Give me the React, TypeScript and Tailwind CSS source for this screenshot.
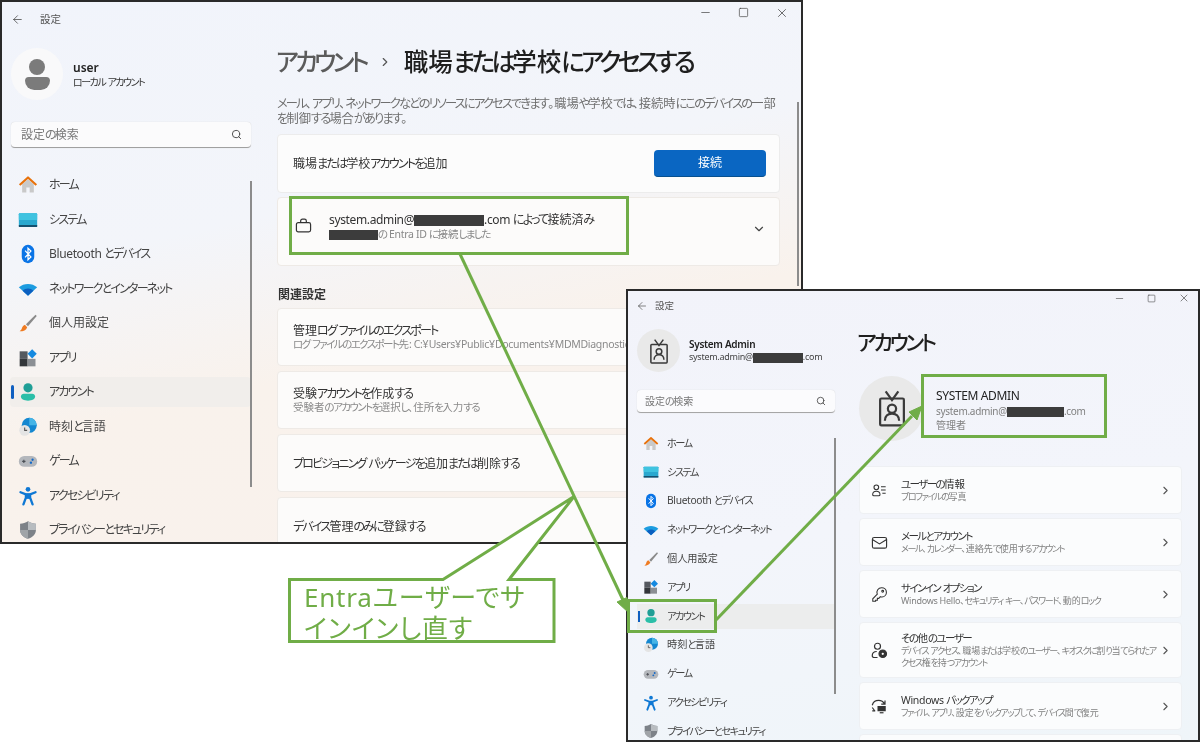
import { ArrowLeft, ChevronDown, ChevronRight, Minus, Search, Square, X } from 'lucide-react'
import type { ReactNode } from 'react'

// Yu Gothic UI's kana are much narrower than Noto's, so kana runs get tightened
function T({ children }: { children: string }) {
  const parts = children.split(/([\u3040-\u30ff]+|[\x20-\x7e]+)/).filter(Boolean)
  return (
    <>
      {parts.map((part, i) => {
        if (/^[\u3040-\u30ff]/.test(part)) return <span key={i} className="tracking-[-0.15em]">{part}</span>
        if (/^[\x20-\x7e]/.test(part)) return <span key={i} className="tracking-[-0.03em]">{part}</span>
        return <span key={i}>{part}</span>
      })}
    </>
  )
}

// ── Nav icons ────────────────────────────────────────────────────────────────
function HomeIcon({ size }: { size: number }) {
  return (
    <svg width={size} height={size} viewBox="0 0 24 24">
      <path d="M5 11 12 5l7 6v10h-5v-6h-4v6H5z" fill="#c9c9c9" />
      <path d="M2 12 12 3l10 9" fill="none" stroke="#e8710a" strokeWidth="2.6" strokeLinejoin="round" />
    </svg>
  )
}
function SystemIcon({ size }: { size: number }) {
  return (
    <svg width={size} height={size} viewBox="0 0 24 24">
      <rect x="1" y="4" width="22" height="16" rx="1" fill="#2aa8cf" />
      <rect x="1" y="4" width="22" height="8" rx="1" fill="#3fc3e0" />
      <rect x="1" y="18" width="22" height="2.4" fill="#14506f" />
    </svg>
  )
}
function BluetoothIcon({ size }: { size: number }) {
  return (
    <svg width={size} height={size} viewBox="0 0 24 24">
      <rect x="4.5" y="1" width="15" height="22" rx="7.5" fill="#0a74e6" />
      <path d="m8.5 8 7 7.5-3.5 3.5V5l3.5 3.500-7 7.500" fill="none" stroke="#fff" strokeWidth="1.5" />
    </svg>
  )
}
function WifiIcon({ size }: { size: number }) {
  return (
    <svg width={size} height={size} viewBox="0 0 24 24">
      <path d="M1 10c6-5.500 16-5.500 22 0l-11 10z" fill="#1c9ce0" />
      <path d="M5.500 14c4-3.500 9-3.500 13 0l-6.500 6z" fill="#0b5fc0" />
    </svg>
  )
}
function BrushIcon({ size }: { size: number }) {
  return (
    <svg width={size} height={size} viewBox="0 0 24 24">
      <path d="M21 2 9.500 13.500l2.500 2.500L22.500 3.500z" fill="#8a8a8a" />
      <path d="M8.500 14.500 11 17c-1 3.500-4.500 5-9 5 2-1.500 2.500-3 3-4.500.5-1.500 1.500-3 3.500-3.500z" fill="#ef7b22" />
    </svg>
  )
}
function AppsIcon({ size }: { size: number }) {
  return (
    <svg width={size} height={size} viewBox="0 0 24 24">
      <rect x="2" y="4" width="9.500" height="9" fill="#55595f" />
      <rect x="2" y="13" width="9.500" height="9" fill="#33363a" />
      <rect x="11.500" y="13" width="9.500" height="9" fill="#8b8f94" />
      <path d="m17 1.500 5.500 5.500-5.500 5.500L11.500 7z" fill="#1489e0" />
    </svg>
  )
}
function AccountIcon({ size }: { size: number }) {
  return (
    <svg width={size} height={size} viewBox="0 0 24 24">
      <circle cx="12" cy="7" r="5.500" fill="#1f9f96" />
      <path d="M3.500 17.500c0-2 1.500-3.500 3.500-3.500h10c2 0 3.500 1.500 3.500 3.500 0 3-3.500 5-8.500 5s-8.500-2-8.500-5z" fill="#2bbfa8" />
    </svg>
  )
}
function TimeIcon({ size }: { size: number }) {
  return (
    <svg width={size} height={size} viewBox="0 0 24 24">
      <circle cx="13.500" cy="10" r="9" fill="#1487d0" />
      <path d="M13.500 1a9 9 0 0 1 9 9h-9z" fill="#45b4e6" />
      <circle cx="8" cy="16" r="6.500" fill="#e4e4e4" />
      <path d="M8 12.500V16h3" fill="none" stroke="#555" strokeWidth="1.300" />
    </svg>
  )
}
function GameIcon({ size }: { size: number }) {
  return (
    <svg width={size} height={size} viewBox="0 0 24 24">
      <rect x="1" y="6" width="22" height="13" rx="6.500" fill="#b4b7bc" />
      <path d="M5 12.500h4M7 10.500v4" stroke="#4b4f55" strokeWidth="1.400" />
      <circle cx="17.500" cy="10.500" r="1.400" fill="#1469c8" />
      <circle cx="15.500" cy="14" r="1.400" fill="#1469c8" />
    </svg>
  )
}
function AccessIcon({ size }: { size: number }) {
  return (
    <svg width={size} height={size} viewBox="0 0 24 24">
      <circle cx="12" cy="4" r="2.800" fill="#0f78d4" />
      <path d="M3 7.500 9.500 10v4L6.500 22M21 7.500 14.500 10v4l3 8M9.500 10h5M9.500 14h5" fill="none" stroke="#0f78d4" strokeWidth="2.800" strokeLinecap="round" strokeLinejoin="round" />
      <rect x="9.500" y="9" width="5" height="6" fill="#0f78d4" />
    </svg>
  )
}
function ShieldIcon({ size }: { size: number }) {
  return (
    <svg width={size} height={size} viewBox="0 0 24 24">
      <path d="M12 1.500c3 2 6 3 9.500 3V12c0 5-4 9-9.500 10.500C6.500 21 2.500 17 2.500 12V4.500c3.500 0 6.500-1 9.500-3z" fill="#7d8288" />
      <path d="M12 1.500c3 2 6 3 9.500 3V12H12z" fill="#b8bcc0" />
      <path d="M12 12v10.500C6.500 21 2.500 17 2.500 12z" fill="#a0a4a8" />
    </svg>
  )
}

function BadgeIcon({ size }: { size: number }) {
  return (
    <svg width={size} height={size} viewBox="0 0 24 24" fill="none" stroke="#3a3a3a" strokeWidth="1.400">
      <path d="M8 1.500 12 7l4-5.500" />
      <rect x="4.500" y="6" width="15" height="17" rx=".8" />
      <circle cx="12" cy="12.500" r="2.600" />
      <path d="M7.500 20c0-3 2-4.500 4.500-4.500s4.500 1.500 4.500 4.500" />
    </svg>
  )
}

const NAV = [
  { label: 'ホーム', Icon: HomeIcon },
  { label: 'システム', Icon: SystemIcon },
  { label: 'Bluetooth とデバイス', Icon: BluetoothIcon },
  { label: 'ネットワークとインターネット', Icon: WifiIcon },
  { label: '個人用設定', Icon: BrushIcon },
  { label: 'アプリ', Icon: AppsIcon },
  { label: 'アカウント', Icon: AccountIcon },
  { label: '時刻と言語', Icon: TimeIcon },
  { label: 'ゲーム', Icon: GameIcon },
  { label: 'アクセシビリティ', Icon: AccessIcon },
  { label: 'プライバシーとセキュリティ', Icon: ShieldIcon },
]

function Redact({ className }: { className: string }) {
  return <span className={`inline-block align-middle bg-[#3c3c3c] ${className}`} />
}

function WindowControls({ large }: { large: boolean }) {
  const size = large ? 13 : 11
  return (
    <div className={large ? 'flex items-center gap-[26px] pr-[12px] pb-[15px] text-[#444]' : 'flex items-center gap-[22px] pr-[8px] pb-[14px] text-[#444]'}>
      <Minus size={size} strokeWidth={1.300} />
      <Square size={size - 2} strokeWidth={1.500} />
      <X size={size + 1} strokeWidth={1.300} />
    </div>
  )
}

// ── Left window ──────────────────────────────────────────────────────────────
function SettingRow({ title, sub }: { title: string; sub?: string }) {
  return (
    <div className="h-[58px] shrink-0 rounded-[4px] border border-[#eeeae6] bg-[#fcfbfa] pl-[15px] flex flex-col justify-center">
      <p className="text-[12px] leading-[15px] text-[#333]"><T>{title}</T></p>
      {sub && <p className="text-[10.500px] leading-[13px] text-[#8a8a8a] whitespace-nowrap"><T>{sub}</T></p>}
    </div>
  )
}

function LeftWindow() {
  return (
    <div className="absolute left-0 top-0 w-[803px] h-[544px] overflow-hidden border-2 border-[#2a2a2a] flex flex-col bg-[linear-gradient(168deg,#f1f4fb_0%,#f3f5fa_38%,#f9f2ec_62%,#f9f1ec_100%)]">
      <div className="h-[36px] shrink-0 flex items-center justify-between">
        <div className="flex items-center pl-[9px] pb-[1px]">
          <ArrowLeft size={13} strokeWidth={1.400} className="text-[#444]" />
          <span className="ml-[16px] text-[10.500px] text-[#555]">設定</span>
        </div>
        <WindowControls large />
      </div>

      <div className="flex-1 flex min-h-0">
        {/* Sidebar */}
        <div className="relative w-[249px] shrink-0 pl-[8px]">
          <div className="mt-[10px] flex items-center gap-[10px] pl-[1px]">
            <div className="w-[52px] h-[52px] rounded-full bg-[#f9f9fa] flex flex-col items-center justify-center">
              <div className="w-[16px] h-[16px] rounded-full bg-[#7b7b7b]" />
              <div className="mt-[2px] w-[25px] h-[13px] rounded-b-[12px] rounded-t-[5px] bg-[#7b7b7b]" />
            </div>
            <div>
              <p className="text-[12px] leading-[15px] font-semibold text-[#222]">user</p>
              <p className="text-[10px] leading-[14px] text-[#333]"><T>ローカル アカウント</T></p>
            </div>
          </div>
          <div className="mt-[22px] ml-[1px] h-[26px] w-[240px] rounded-[4px] bg-[#fbfbfc] border-b border-[#a0a0a0] shadow-[0_0_1px_#ccc] flex items-center justify-between pl-[10px] pr-[9px]">
            <span className="text-[12px] text-[#777]"><T>設定の検索</T></span>
            <Search size={11} className="text-[#444]" />
          </div>
          <div className="mt-[22px] flex flex-col gap-[4.550px]">
            {NAV.map(({ label, Icon }) => (
              <div
                key={label}
                className={`relative h-[30px] shrink-0 pl-[8px] flex items-center gap-[11px] rounded-[4px] ${label === 'アカウント' ? 'bg-[#f1eeeb]' : ''}`}
              >
                {label === 'アカウント' && <span className="absolute left-[1px] top-[8px] w-[3px] h-[14px] rounded-full bg-[#0f5fc0]" />}
                <Icon size={20} />
                <span className="text-[12px] text-[#444] whitespace-nowrap"><T>{label}</T></span>
              </div>
            ))}
          </div>
          <div className="absolute right-[-1px] top-[143px] w-[2px] h-[306px] bg-[#8c8c8c]" />
        </div>

        {/* Content */}
        <div className="relative flex-1 min-w-0 pl-[26px] pr-[21px]">
          <div className="mt-[6px] h-[36px] flex items-center whitespace-nowrap -ml-[1px]">
            <span className="text-[24.500px] font-medium text-[#5b5b5b]"><T>アカウント</T></span>
            <ChevronRight size={14} className="mx-[12px] text-[#555]" />
            <span className="text-[24.500px] font-medium text-[#1f1f1f]"><T>職場または学校にアクセスする</T></span>
          </div>
          <div className="mt-[16px] text-[12.250px] leading-[15px] text-[#6f6f6f] whitespace-nowrap">
            <p><T>メール、アプリ、ネットワークなどのリソースにアクセスできます。職場や学校では、接続時にこのデバイスの一部</T></p>
            <p><T>を制御する場合があります。</T></p>
          </div>
          <div className="mt-[8px] h-[59px] rounded-[4px] border border-[#ececec] bg-[#fcfcfc] pl-[15px] pr-[13px] flex items-center justify-between">
            <span className="text-[12px] text-[#333]"><T>職場または学校アカウントを追加</T></span>
            <button className="w-[112px] h-[27px] rounded-[4px] bg-[#0a66c2] border-b border-[#07508f] text-[12px] text-white">接続</button>
          </div>
          <div className="mt-[4px] h-[69px] rounded-[4px] border border-[#eeeae6] bg-[#fcfbfa] pl-[17px] pr-[13px] flex items-center">
            <svg width="17" height="17" viewBox="0 0 24 24" fill="none" stroke="#333" strokeWidth="1.700" className="mt-[-12px]">
              <rect x="2" y="8" width="20" height="13" rx="2.500" />
              <path d="M8 8V5.500C8 4 9 3 10.500 3h3C15 3 16 4 16 5.500V8" />
            </svg>
            <div className="ml-[17px] mt-[-10px]">
              <p className="text-[12px] leading-[15px] text-[#333] whitespace-nowrap">
                <T>system.admin@</T><Redact className="w-[70px] h-[11px]" /><T>.com によって接続済み</T>
              </p>
              <p className="text-[10.500px] leading-[14px] text-[#888] whitespace-nowrap">
                <Redact className="w-[49px] h-[10px]" /><T>の Entra ID に接続しました</T>
              </p>
            </div>
            <ChevronDown size={14} className="ml-auto text-[#444] mt-[-6px]" />
          </div>
          <p className="mt-[20px] pl-[1px] text-[12px] leading-[18px] font-semibold text-[#333]">関連設定</p>
          <div className="mt-[4px] flex flex-col gap-[5px]">
            <SettingRow title="管理ログ ファイルのエクスポート" sub="ログ ファイルのエクスポート先: C:¥Users¥Public¥Documents¥MDMDiagnostics" />
            <SettingRow title="受験アカウントを作成する" sub="受験者のアカウントを選択し、住所を入力する" />
            <SettingRow title="プロビジョニング パッケージを追加または削除する" />
            <SettingRow title="デバイス管理のみに登録する" />
          </div>
          <div className="absolute right-[2px] top-[64px] w-[2px] h-[184px] bg-[#8c8c8c]" />
        </div>
      </div>
    </div>
  )
}

// ── Right window ─────────────────────────────────────────────────────────────
function AccountRow({ icon, title, sub, tall }: { icon: ReactNode; title: string; sub: string[]; tall?: boolean }) {
  return (
    <div className={`${tall ? 'h-[56px]' : 'h-[48px]'} shrink-0 rounded-[4px] bg-[#fbfcfd] border border-[#eef0f3] flex items-center pl-[10px] pr-[9px]`}>
      <div className="w-[18px] flex justify-center text-[#333]">{icon}</div>
      <div className="ml-[13px] pt-[1px] flex-1 min-w-0">
        <p className="text-[10.500px] leading-[13px] text-[#333]"><T>{title}</T></p>
        {sub.map((line) => (
          <p key={line} className="text-[9px] leading-[12.500px] text-[#808080] whitespace-nowrap"><T>{line}</T></p>
        ))}
      </div>
      <ChevronRight size={13} className="ml-[4px] shrink-0 text-[#555]" />
    </div>
  )
}

function RightWindow() {
  return (
    <div className="absolute left-[626px] top-[289px] w-[574px] h-[453px] overflow-hidden border-2 border-[#2a2a2a] flex flex-col bg-[linear-gradient(170deg,#f2f3fa_0%,#f3f5fb_50%,#eff5f9_100%)]">
      <div className="h-[28px] shrink-0 flex items-center justify-between">
        <div className="flex items-center pl-[8px] pt-[2px]">
          <ArrowLeft size={12} strokeWidth={1.300} className="text-[#444]" />
          <span className="ml-[7px] text-[9.500px] text-[#555]">設定</span>
        </div>
        <WindowControls large={false} />
      </div>
      <div className="flex-1 flex min-h-0">
        <div className="relative w-[207px] shrink-0 pl-[9px]">
          <div className="mt-[10px] flex items-center gap-[9px]">
            <div className="w-[43px] h-[43px] rounded-full bg-[#e9e9e9] flex items-center justify-center">
              <BadgeIcon size={26} />
            </div>
            <div>
              <p className="text-[10px] leading-[13px] font-semibold text-[#222]"><T>System Admin</T></p>
              <p className="text-[9px] leading-[12px] text-[#444] whitespace-nowrap">
                <T>system.admin@</T><Redact className="w-[50px] h-[10px]" /><T>.com</T>
              </p>
            </div>
          </div>
          <div className="mt-[18px] h-[23px] w-[198px] rounded-[4px] bg-[#fbfbfd] border-b border-[#a6a6a6] shadow-[0_0_1px_#ccc] flex items-center justify-between pl-[8px] pr-[9px]">
            <span className="text-[10px] text-[#777]"><T>設定の検索</T></span>
            <Search size={10} className="text-[#444]" />
          </div>
          <div className="mt-[18px] flex flex-col gap-[3.800px]">
            {NAV.map(({ label, Icon }) => (
              <div
                key={label}
                className={`relative h-[25px] shrink-0 pl-[6px] flex items-center gap-[8px] ${label === 'アカウント' ? 'bg-[#eceded]' : ''}`}
              >
                {label === 'アカウント' && <span className="absolute left-[1px] top-[7px] w-[2px] h-[11px] bg-[#0f5fc0]" />}
                <Icon size={16} />
                <span className="text-[10.200px] text-[#444] whitespace-nowrap"><T>{label}</T></span>
              </div>
            ))}
          </div>
          <div className="absolute right-[-1px] top-[119px] w-[2px] h-[256px] bg-[#8c8c8c]" />
        </div>
        <div className="flex-1 min-w-0 pl-[24px] pr-[16px]">
          <p className="mt-[8px] h-[30px] -ml-[2px] text-[21px] leading-[30px] font-medium text-[#1f1f1f]"><T>アカウント</T></p>
          <div className="mt-[18px] h-[66px] flex items-center">
            <div className="w-[65px] h-[65px] rounded-full bg-[#e9e9e9] flex items-center justify-center">
              <BadgeIcon size={38} />
            </div>
            <div className="ml-[12px] mt-[4px]">
              <p className="text-[12px] leading-[16px] text-[#222]"><T>SYSTEM ADMIN</T></p>
              <p className="text-[10px] leading-[14px] text-[#808080] whitespace-nowrap">
                <T>system.admin@</T><Redact className="w-[57px] h-[10px]" /><T>.com</T>
              </p>
              <p className="text-[10px] leading-[14px] text-[#808080]">管理者</p>
            </div>
          </div>
          <div className="mt-[25px] flex flex-col gap-[4px]">
            <AccountRow
              title="ユーザーの情報"
              sub={['プロファイルの写真']}
              icon={
                <svg width="16" height="16" viewBox="0 0 24 24" fill="none" stroke="currentColor" strokeWidth="1.600">
                  <circle cx="8" cy="8" r="3.500" />
                  <path d="M2.500 19c0-3.500 2-5 5.500-5s5.500 1.500 5.500 5c0 1-1 1.500-2 1.500h-7c-1 0-2-.5-2-1.500zM15 7h7M15 12h7M17 17h5" />
                </svg>
              }
            />
            <AccountRow
              title="メールとアカウント"
              sub={['メール、カレンダー、連絡先で使用するアカウント']}
              icon={
                <svg width="17" height="17" viewBox="0 0 24 24" fill="none" stroke="currentColor" strokeWidth="1.600">
                  <rect x="2" y="5" width="20" height="15" rx="2.500" />
                  <path d="m2.500 8 9.500 6 9.500-6" />
                </svg>
              }
            />
            <AccountRow
              title="サインイン オプション"
              sub={['Windows Hello、セキュリティ キー、パスワード、動的ロック']}
              icon={
                <svg width="17" height="17" viewBox="0 0 24 24" fill="none" stroke="currentColor" strokeWidth="1.500">
                  <path d="M15 2.500a6.500 6.500 0 0 1 .5 13c-.8 0-1.600-.1-2.300-.4L11 17.500H9V20H6.500v1.500H2.500v-3.500l6.400-6.400A6.500 6.500 0 0 1 15 2.500z" />
                  <circle cx="16.500" cy="7.500" r="1.300" />
                </svg>
              }
            />
            <AccountRow
              tall
              title="その他のユーザー"
              sub={['デバイス アクセス、職場または学校のユーザー、キオスクに割り当てられたア', 'クセス権を持つアカウント']}
              icon={
                <svg width="18" height="18" viewBox="0 0 24 24" fill="none" stroke="currentColor" strokeWidth="1.600">
                  <circle cx="10" cy="7" r="4" />
                  <path d="M10 22H6c-2 0-3-1-3-2.500C3 16 5.500 14 9 14" />
                  <circle cx="17" cy="17" r="5" fill="currentColor" />
                  <circle cx="17" cy="17" r="1.500" fill="#fff" stroke="none" />
                </svg>
              }
            />
            <AccountRow
              title="Windows バックアップ"
              sub={['ファイル、アプリ、設定をバックアップして、デバイス間で復元']}
              icon={
                <svg width="18" height="18" viewBox="0 0 24 24" fill="none" stroke="currentColor" strokeWidth="1.600">
                  <path d="M3 11c1-4 4.500-6.500 8.500-6.500 3.500 0 6.500 2 8 5M20 4.500v5h-5M3 14l3 4M3 18.500h4" />
                  <rect x="10" y="12" width="11" height="7" fill="currentColor" stroke="none" />
                  <path d="M13 21h5" />
                </svg>
              }
            />
            <div className="h-[48px] shrink-0 rounded-[4px] bg-[#fbfcfd] border border-[#eef0f3]" />
          </div>
        </div>
      </div>
    </div>
  )
}

// ── Green annotations laid over both windows ─────────────────────────────────
function Annotations() {
  const green = '#70ad47'
  return (
    <>
      <svg className="absolute inset-0 pointer-events-none" width="1200" height="742" viewBox="0 0 1200 742">
        <path d="M289.500 579.500H443l131-83-65 83h45v62H289.500z" fill="#fff" stroke={green} strokeWidth="3" />
        <path d="M460 254 623 600" stroke={green} strokeWidth="3" />
        <path d="m629 613-12-11 10-4.500z" fill={green} stroke={green} />
        <path d="M716 620 912 416" stroke={green} strokeWidth="3" />
        <path d="m922 406-5 14-8-8z" fill={green} stroke={green} />
      </svg>
      <div className="absolute left-[289px] top-[196px] w-[340px] h-[59px] border-[3px] border-[#70ad47]" />
      <div className="absolute left-[627px] top-[599px] w-[90px] h-[34px] border-[3px] border-[#70ad47]" />
      <div className="absolute left-[921px] top-[374px] w-[186px] h-[64px] border-[3px] border-[#70ad47]" />
      <p className="absolute left-[304px] top-[582px] text-[26px] leading-[31px] tracking-[0.8px] text-[#70ad47] whitespace-nowrap">
        Entraユーザーでサ
        <br />
        インインし直す
      </p>
    </>
  )
}

export default function App() {
  return (
    <div className="relative w-[1200px] h-[742px] overflow-hidden bg-white blur-[0.3px] font-['Noto_Sans','Noto_Sans_CJK_JP',sans-serif] [font-feature-settings:'palt']">
      <LeftWindow />
      <RightWindow />
      <Annotations />
    </div>
  )
}
